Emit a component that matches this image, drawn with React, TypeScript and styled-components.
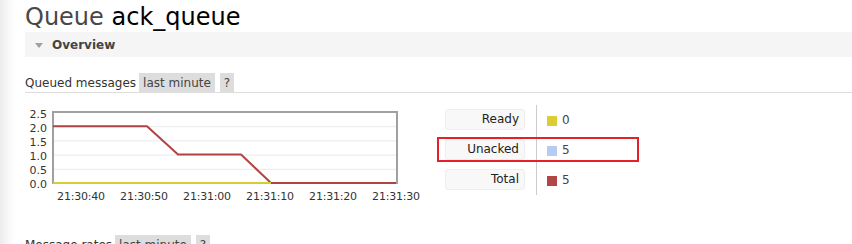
import styled, { createGlobalStyle } from "styled-components";

const GlobalStyle = createGlobalStyle`
  html, body {
    margin: 0;
    padding: 0;
    background: #fff;
  }
  body {
    font-family: "DejaVu Sans", Verdana, sans-serif;
    color: #333;
  }
`;

const Page = styled.div`
  min-height: 100vh;
  padding-left: 25px;
  background: linear-gradient(to right, #ececec 0, #fafafa 10px, #fff 16px);
  overflow: hidden;
`;

const Title = styled.h1`
  margin: 0;
  padding-top: 3px;
  height: 29px;
  line-height: 29px;
  font-size: 24px;
  font-weight: normal;
  color: #484848;
  white-space: nowrap;

  b {
    font-weight: normal;
    color: #000;
  }
`;

const SectionHeader = styled.div`
  display: flex;
  align-items: center;
  gap: 9px;
  height: 25px;
  padding-left: 10px;
  background: #f5f5f5;
  font-size: 12px;
  font-weight: bold;
  color: #444;
`;

const Arrow = styled.span`
  width: 0;
  height: 0;
  border-left: 4px solid transparent;
  border-right: 4px solid transparent;
  border-top: 5px solid #a0a0a0;
  margin-top: 1px;
`;

const UpdateRow = styled.div<{ $top: number }>`
  display: flex;
  align-items: center;
  margin-top: ${(p) => p.$top}px;
  height: 19px;
  border-bottom: 1px solid #ddd;
  font-size: 12px;
  color: #333;
  white-space: nowrap;
`;

const RowLabel = styled.span`
  margin-right: 3px;
`;

const Chip = styled.span`
  display: flex;
  align-items: center;
  height: 19px;
  padding: 0 4px;
  margin-right: 5px;
  background: #ddd;
  color: #444;
`;

const ChartRow = styled.div`
  display: flex;
  align-items: flex-start;
  margin-top: 10px;
  height: 100px;
`;

const Legend = styled.div`
  display: grid;
  grid-template-columns: auto auto;
  margin-top: 2px;
  margin-left: 15px;
`;

const LegendRow = styled.div`
  display: contents;
`;

const LegendKey = styled.div`
  position: relative;
  height: 30px;
  padding: 4px 11px 0 0;
  box-sizing: border-box;
`;

const KeyBox = styled.div`
  width: 80px;
  height: 21px;
  box-sizing: border-box;
  padding-right: 5px;
  border: 1px solid #eee;
  border-radius: 3px;
  background: #f8f8f8;
  font-size: 12px;
  line-height: 19px;
  text-align: right;
  color: #222;
`;

const LegendValue = styled.div`
  display: flex;
  align-items: center;
  gap: 5px;
  height: 30px;
  padding-left: 10px;
  border-left: 1px solid #ccc;
  font-size: 12px;
  color: #444;
  box-sizing: border-box;
`;

const Swatch = styled.span<{ $color: string }>`
  width: 10px;
  height: 10px;
  background: ${(p) => p.$color};
  margin-top: 1px;
`;

const Highlight = styled.div`
  position: absolute;
  left: -8px;
  top: 2px;
  width: 202px;
  height: 25px;
  box-sizing: border-box;
  border: 2px solid #e3212a;
  pointer-events: none;
`;

const AxisText = styled.text`
  font-family: "DejaVu Sans", Verdana, sans-serif;
  font-size: 11px;
  fill: #333;
`;

const plotLeft = 28;
const plotRight = 371;
const plotTop = 9;
const plotBottom = 80;
const unit = (plotBottom - plotTop) / 2.5;
const yOf = (v: number) => plotBottom - v * unit;

const yTicks = [0, 0.5, 1, 1.5, 2, 2.5];
const xTicks = ["21:30:40", "21:30:50", "21:31:00", "21:31:10", "21:31:20", "21:31:30"];

// queue depth, [x, messages]
const total = [
  [28, 2],
  [122, 2],
  [153, 1],
  [216, 1],
  [246, 0],
  [plotRight, 0],
];

const toPoints = (pts: number[][]) => pts.map(([x, v]) => `${x},${yOf(v)}`).join(" ");

function QueueChart() {
  return (
    <svg width={405} height={100} viewBox="0 0 405 100">
      {yTicks.slice(1, 5).map((t) => (
        <line key={t} x1={plotLeft} x2={plotRight} y1={yOf(t) + 0.5} y2={yOf(t) + 0.5} stroke="#eaeaea" strokeWidth={1} />
      ))}
      <rect
        x={plotLeft}
        y={plotTop}
        width={plotRight - plotLeft + 1}
        height={plotBottom - plotTop}
        fill="none"
        stroke="#a0a0a0"
        strokeWidth={2}
      />
      <polyline points={toPoints(total)} fill="none" stroke="#b24343" strokeWidth={2} strokeLinejoin="round" />
      <polyline points={toPoints([[28, 0], [246, 0]])} fill="none" stroke="#d9cb32" strokeWidth={2} />
      {yTicks.map((t) => (
        <AxisText key={t} x={22} y={yOf(t) + 1 + t * 0.6} textAnchor="end" dominantBaseline="central">
          {t.toFixed(1)}
        </AxisText>
      ))}
      {xTicks.map((label, i) => (
        <AxisText key={label} x={56 + 63 * i} y={93} textAnchor="middle" dominantBaseline="central" letterSpacing={-0.2}>
          {label}
        </AxisText>
      ))}
    </svg>
  );
}

const legend = [
  { name: "Ready", color: "#dccd35", value: 0 },
  { name: "Unacked", color: "#b7cbf2", value: 5, marked: true },
  { name: "Total", color: "#b24545", value: 5 },
];

export default function App() {
  return (
    <>
      <GlobalStyle />
      <Page>
        <Title>
          Queue <b>ack_queue</b>
        </Title>
        <SectionHeader>
          <Arrow />
          Overview
        </SectionHeader>

        <UpdateRow $top={16}>
          <RowLabel>Queued messages</RowLabel>
          <Chip>last minute</Chip>
          <Chip>?</Chip>
        </UpdateRow>

        <ChartRow>
          <QueueChart />
          <Legend>
            {legend.map((item) => (
              <LegendRow key={item.name}>
                <LegendKey>
                  <KeyBox>{item.name}</KeyBox>
                  {item.marked && <Highlight />}
                </LegendKey>
                <LegendValue>
                  <Swatch $color={item.color} />
                  {item.value}
                </LegendValue>
              </LegendRow>
            ))}
          </Legend>
        </ChartRow>

        <UpdateRow $top={32}>
          <RowLabel>Message rates</RowLabel>
          <Chip>last minute</Chip>
          <Chip>?</Chip>
        </UpdateRow>
      </Page>
    </>
  );
}
